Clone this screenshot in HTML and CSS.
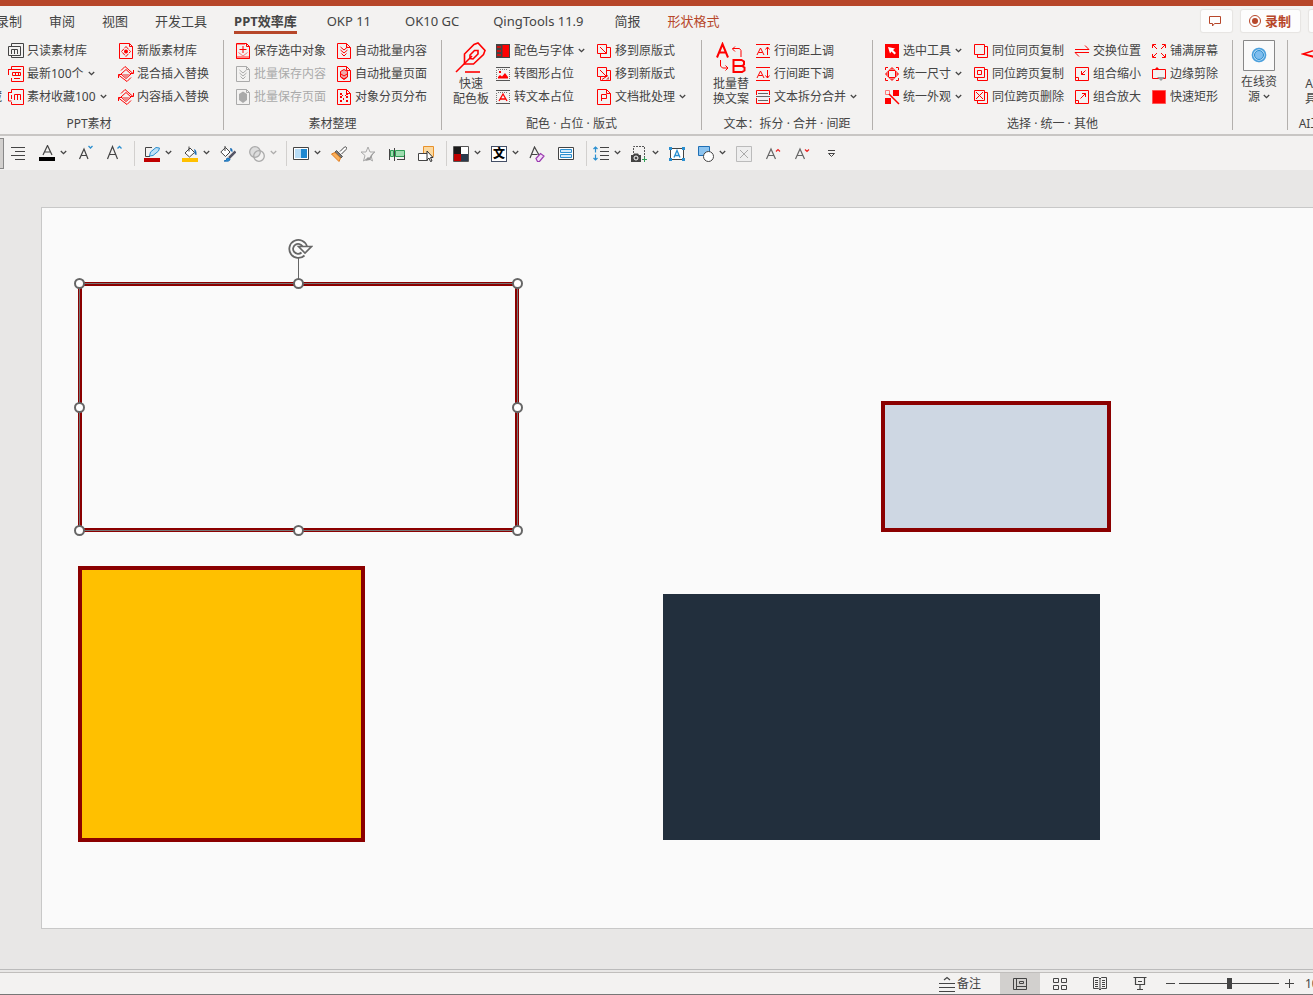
FILE: index.html
```html
<!doctype html>
<html lang="zh-CN">
<head>
<meta charset="utf-8">
<meta name="viewport" content="width=device-width, initial-scale=1.0">
<link rel="stylesheet" href="styles.css">
<title>PPT效率库</title>
</head>
<body>

<svg class="sprite" aria-hidden="true">
  <symbol id="chev" viewBox="0 0 7 5"><path d="M.8 1l2.7 2.7L6.2 1" fill="none" stroke="#444" stroke-width="1.3"/></symbol>
  <symbol id="doc" viewBox="0 0 16 16"><path d="M1.5.5h10l3 3v12h-13zM11.5.5v3h3" fill="none" stroke="currentColor"/></symbol>
  <symbol id="doc-r" viewBox="0 0 16 16"><path d="M1.5.5h9l4 4v11h-13zM10.5.5v4h4" fill="none" stroke="currentColor"/></symbol>

  <!-- PPT素材 -->
  <symbol id="readonly" viewBox="0 0 16 16"><g fill="none" stroke="currentColor"><path d="M3.5 3V.5h12v14h-12V13"/><path d="M.5 3.5h12v9H.5z"/><path d="M3.5 11V6.5h6V11M6.5 6.5V11"/></g></symbol>
  <symbol id="latest" viewBox="0 0 16 16"><g fill="none" stroke="currentColor"><path d="M3.5 3V.5h12v15h-12V12M0 3.5h13"/><path d="M.5 3v6M4.5 6.5h8v3h-8zM7.5 6v4M10.5 6v4M6 12.5h6"/></g></symbol>
  <symbol id="favorite" viewBox="0 0 16 16"><g fill="none" stroke="currentColor"><path d="M3.5 3V.5h12v15h-12V13M0 3.5h4M.5 3v9h3"/><path d="M6.5 11V5.5h6V11M9.5 5.5V11M3.5 6v4"/></g></symbol>
  <symbol id="newlib" viewBox="0 0 16 16"><path d="M8 3.5L12.5 8.5 8 13.5 3.500 8.500z" fill="none" stroke="currentColor" stroke-dasharray="4 1"/><circle cx="8" cy="8.5" r="2" fill="currentColor"/></symbol>
  <symbol id="swap-in" viewBox="0 0 16 16"><path d="M8 3.500l5 4.500-5 4.500L3 8z" fill="none" stroke="currentColor"/><path d="M4 8h8l-4 4z" fill="#e88"/><path d="M3 4.500L7 .5l8 7M15.500 4v3.500H12M13 11.500l-4 4L.5 9M.5 12V8.500H4" fill="none" stroke="currentColor"/></symbol>

  <!-- 素材整理 -->
  <symbol id="saveobj" viewBox="0 0 16 16"><path d="M1 13h14v3H1z" fill="#f88"/><path d="M1 1h9v1H1z" fill="#f88"/><path d="M8 3v7M4.500 6.500h7" stroke="currentColor"/><path d="M3.500 9.500L8 13l4.500-3.500" fill="none" stroke="#f77"/></symbol>
  <symbol id="arrows" viewBox="0 0 16 16"><path d="M4.500 4L8 7l3.500-3M4.500 7L8 10l3.500-3M5.500 10.500L8 13l2.500-2.500" fill="none" stroke="currentColor"/></symbol>
  <symbol id="blob" viewBox="0 0 16 16"><path d="M8 2.500l4 2.500v6l-4 3-4-3V5z" fill="currentColor"/></symbol>
  <symbol id="blob-r" viewBox="0 0 16 16"><path d="M8 3.500l3.500 2v5.500L8 13.500 4.500 11V5.500z" fill="#eaa" stroke="currentColor"/><path d="M5 8l3 2 3-2M5 11l3 2 3-2" fill="none" stroke="currentColor"/></symbol>
  <symbol id="spread" viewBox="0 0 16 16"><path d="M4 4h2v2H4zM6 6h1v1H6zM4 7h2v2H4zM4 11h2v2H4zM10 4h2v2h-2zM9 6h1v1H9zM10 7h2v2h-2zM10 11h2v2h-2zM7 9h1v2H7z" fill="currentColor"/></symbol>

  <!-- 配色 -->
  <symbol id="pen" viewBox="0 0 32 32"><g fill="none" stroke="currentColor" stroke-width="1.600"><path d="M1 30L17 14"/><path d="M9.500 22V12L19 2.500l4-1.500 7 7.500-1.500 4L18.500 22H9.500z"/><path d="M15 16.500V13l4.500-4.500h3.500v3.500L18 17z"/><path d="M10 30h15"/></g></symbol>
  <symbol id="palette" viewBox="0 0 16 16"><path d="M1 1h14v14H1z" fill="#444"/><path d="M7.500 2H14v12H7.500z" fill="currentColor"/><path d="M2 3h4v2H2zM2 7h4v2H2zM2 11h4v2H2z" fill="#c11"/></symbol>
  <symbol id="ph-img" viewBox="0 0 16 16"><path d="M1 1.500h14M1 14.500h14" stroke="#555"/><path d="M1.500 4v9M14.500 4v9M3 3.500h10" stroke="#777" stroke-dasharray="1 1"/><path d="M3 12.500V11l2-2 2 1.500L10 7l3 4v1.500z" fill="currentColor"/><path d="M4 5h2v2H4z" fill="currentColor"/></symbol>
  <symbol id="ph-text" viewBox="0 0 16 16"><path d="M1 1.500h14M1 14.500h14" stroke="#555"/><path d="M1.500 4v9M14.500 4v9M3 3.500h10" stroke="#777" stroke-dasharray="1 1"/><path d="M4 12l4-7 4 7M5.500 10h5" fill="none" stroke="currentColor" stroke-width="1.300"/></symbol>
  <symbol id="move" viewBox="0 0 16 16"><path d="M1.500 1.500h9v9h-9z M11 4.500h3.500v10h-10V11M4 4l6.500 6.500" fill="none" stroke="currentColor"/></symbol>
  <symbol id="move-new" viewBox="0 0 16 16"><path d="M11 12.500l2-2v3h-3z" fill="#c66"/><path d="M1.500 1.500h9v9h-9zM11 4.500h3.500v10h-10V11M4 4l6.500 6.500M12 9.500l-6 4" fill="none" stroke="currentColor"/></symbol>
  <symbol id="batch" viewBox="0 0 16 16"><path d="M5.500 12V5.500h5v4h-5" fill="none" stroke="currentColor"/></symbol>

  <!-- 文本 -->
  <symbol id="ab" viewBox="0 0 32 32"><g fill="none" stroke="currentColor"><path d="M2 15.500L7.500 2 13 15.500M4 10.500h7" stroke-width="2"/><path d="M18.500 18h8l2.500 1.500v3L27 24l2.500 1.500v3L27 30h-8.500zM18.500 24H27" stroke-width="2"/><path d="M20 4.500L17.500 7l2.500 2.500M17.500 6.500h7l1.500 2V15M5.500 18v6l2 2h5M10.500 23.500l2.500 2.500-2.500 2.500"/></g></symbol>
  <symbol id="sp-up" viewBox="0 0 16 16"><path d="M1 1.500h14M1 14.500h14M2 12l3.500-7L9 12M3.500 9.500h4M12.500 12V4M10.500 6.500l2-2.500 2 2.500" fill="none" stroke="currentColor"/></symbol>
  <symbol id="sp-down" viewBox="0 0 16 16"><path d="M1 1.500h14M1 14.500h14M2 12l3.500-7L9 12M3.500 9.500h4M12.500 4v8M10.500 9.500l2 2.500 2-2.500" fill="none" stroke="currentColor"/></symbol>
  <symbol id="split" viewBox="0 0 16 16"><path d="M1.500 6V1.500h13V6M1.500 9v5.500h13V9" fill="none" stroke="currentColor"/><path d="M3 4.500h10M3 11.500h10M1 7.500h14" stroke="#666"/></symbol>

  <!-- 选择 -->
  <symbol id="select" viewBox="0 0 16 16"><path d="M1 1h14v14H1z" fill="currentColor"/><path d="M4 4l7 1.500-2 1.500 3 3-1.500 1.500-3-3L6 10.500z" fill="#fff"/></symbol>
  <symbol id="size" viewBox="0 0 16 16"><g fill="none" stroke="currentColor"><path d="M1.500 4V1.500H4M12 1.500h2.500V4M14.500 12v2.500H12M4 14.500H1.500V12"/><path d="M8 2v3M8 11v3M2 8h3M11 8h3M5 4.500L8 1.500l3 3M5 11.500l3 3 3-3M4.500 5l-3 3 3 3M11.500 5l3 3-3 3"/><path d="M5 4.500h6l.5.5v6l-.5.5H5l-.5-.5V5z"/></g></symbol>
  <symbol id="look" viewBox="0 0 16 16"><path d="M9 1h6v6H9zM1 9h6v6H1z" fill="currentColor"/><path d="M1.500 1.500h4v4h-4z" fill="none" stroke="#f77"/><path d="M5 5l10 10" stroke="currentColor" stroke-width="1.500"/></symbol>
  <symbol id="pages" viewBox="0 0 16 16"><path d="M1.500 1.500h10v10h-10zM12 3.500h2.500v11H4.500V12" fill="none" stroke="currentColor"/></symbol>
  <symbol id="pg-in" viewBox="0 0 16 16"><path d="M4.500 4.500h4v4h-4z" fill="none" stroke="currentColor"/></symbol>
  <symbol id="pg-x" viewBox="0 0 16 16"><path d="M3 3l7 7M10 3l-7 7" stroke="currentColor"/></symbol>
  <symbol id="swap" viewBox="0 0 16 16"><path d="M1 6.500h14L11 2.500M15 9.500H1l4 4" fill="none" stroke="currentColor"/></symbol>
  <symbol id="shrink" viewBox="0 0 16 16"><path d="M1.500 1.500h13v13h-13zM1.500 11.500h3v3M11.500 4.500l-4 4M7.500 5v3.500H11" fill="none" stroke="currentColor"/></symbol>
  <symbol id="grow" viewBox="0 0 16 16"><path d="M1.500 1.500h13v13h-13zM1.500 11.500h3v3M6.500 9.500l5-5M8 4.500h3.500V8" fill="none" stroke="currentColor"/></symbol>
  <symbol id="fill" viewBox="0 0 16 16"><path d="M1.500 5V1.500H5M11 1.500h3.500V5M14.500 11v3.500H11M5 14.500H1.500V11M2 2l4 4M14 2l-4 4M2 14l4-4M14 14l-4-4" fill="none" stroke="currentColor"/></symbol>
  <symbol id="edge" viewBox="0 0 16 16"><path d="M1.500 3.500h13v9h-13z" fill="none" stroke="currentColor"/><path d="M3 4l3-3 3 3z" fill="currentColor"/><path d="M6 11h8l-4 4z" fill="#999"/></symbol>
  <symbol id="rect" viewBox="0 0 16 16"><path d="M1.500 1.500h13v13h-13z" fill="currentColor" stroke="#f55"/></symbol>

  <!-- quick access toolbar -->
  <symbol id="t-lines" viewBox="0 0 16 16"><path d="M1 2.500h14M5 6.500h10M1 10.500h14M5 14.500h10" stroke="#444"/></symbol>
  <symbol id="t-color" viewBox="0 0 16 16"><path d="M4 10L8.500.5 13 10M5.500 7h6" fill="none" stroke="#444" stroke-width="1.200"/><path d="M0 12h16v4H0z"/></symbol>
  <symbol id="t-adown" viewBox="0 0 16 16"><path d="M2.500 14L7 4l4 10M4 10.500h6" fill="none" stroke="#444" stroke-width="1.200"/><path d="M11.500 1l2 2 2-2" fill="none" stroke="#2a8fd0" stroke-width="1.300"/></symbol>
  <symbol id="t-aup" viewBox="0 0 16 16"><path d="M1.500 14L6.500 1.500 11.500 14M3 9.500h7" fill="none" stroke="#444" stroke-width="1.200"/><path d="M11.500 3.500l2-2 2 2" fill="none" stroke="#2a8fd0" stroke-width="1.300"/></symbol>
  <symbol id="t-pen" viewBox="0 0 16 16"><path d="M8 1.500H1.500v9H6" fill="none" stroke="#444"/><path d="M5.500 10l1-4L12 1.500 15.500 2 14.500 5 9 9.500z" fill="#bfe0f5" stroke="#2a8fd0"/><path d="M0 12h16v4H0z" fill="#c00000"/></symbol>
  <symbol id="t-bucket" viewBox="0 0 16 16"><path d="M3 7l5-5 4.500 4.500L7.500 11zM7 .5v5" fill="#fff" stroke="#444"/><path d="M12 3q3 1 2.500 6-2.500 0-2-4z" fill="#1f6fb5"/><path d="M0 12h16v4H0z" fill="#ffc000"/></symbol>
  <symbol id="t-style" viewBox="0 0 16 16"><path d="M.8 6L5.500 1.500 10 6l-4.500 4.500zM5 0v5" fill="#fff" stroke="#444"/><path d="M10 2q3 0 2.500 4l-2-1z" fill="#1f6fb5"/><path d="M15.500 5.500L9 12" stroke="#556" stroke-width="2.500"/><path d="M4 15q3 0 3-3l3 1q0 3-6 2z" fill="#2a8fd0" stroke="#1f6fb5"/></symbol>
  <symbol id="t-merge" viewBox="0 0 16 16"><g fill="none" stroke="#aaa" stroke-width="1.300"><circle cx="6" cy="6" r="5.300" fill="#ddd"/><circle cx="10" cy="10" r="5.300"/></g></symbol>
  <symbol id="t-half" viewBox="0 0 16 16"><path d="M.5 1.500h15v12H.5z" fill="#fff" stroke="#444"/><path d="M2 3h6v9H2z" fill="#b8dcf5"/><path d="M8 3h6v9H8z" fill="#1e88d0"/></symbol>
  <symbol id="t-brush" viewBox="0 0 16 16"><path d="M9 5.500L13.500 1q1.500-.5 2 .5T15 3.500L10.500 8" fill="#fff" stroke="#444"/><path d="M5.500 4.500l6 6-1.500 1.500-6-6z" fill="#777" stroke="#555"/><path d="M.5 8L4 6.500l5.500 5.500L8 15.500z" fill="#fbb15a" stroke="#e07b1c"/></symbol>
  <symbol id="t-star" viewBox="0 0 16 16"><path d="M8 1l2 5h5l-4 3.500 1.500 5.500L8 12l-4.500 3L5 9.500 1 6h5z" fill="none" stroke="#aaa"/><path d="M14.500 5L9 12l-1-1-3 4 5-1z" fill="#999"/></symbol>
  <symbol id="t-align" viewBox="0 0 16 16"><path d="M1.500 4.500h3v6h-3zM6.500 4.500h9v6h-9z" fill="#9fdcb0" stroke="#2f9e55"/><path d="M.5 3v11M5.500 2v13M15.500 9v5M8 13.500h7" stroke="#444"/></symbol>
  <symbol id="t-pick" viewBox="0 0 16 16"><path d="M5.500.5h10v10h-10z" fill="#fbd9a0" stroke="#e8912a"/><path d="M.5 7.500h9v7h-9z" fill="#fff" stroke="#444"/><path d="M9 5v9l2-2 1.500 3.500 1.500-.5-1.500-3.500H15z" fill="#fff" stroke="#333"/></symbol>
  <symbol id="t-swatch" viewBox="0 0 16 16"><path d="M.5.5h15v15H.5z" fill="#fff" stroke="#555"/><path d="M1 1h7v7H1z" fill="#1a1a1a"/><path d="M1 8h7v7H1z" fill="#c00000"/><path d="M8 8h7v7H8z" fill="#2b3a4c"/></symbol>
  <symbol id="t-erase" viewBox="0 0 16 16"><path d="M1 12L5.500 1 10 9M2.500 8.500h6" fill="none" stroke="#444" stroke-width="1.200"/><path d="M7 12.500l4.500-5 3.500 2.500-4.500 5.500H8.500z" fill="#f3dcf7" stroke="#9b3bb0" stroke-width="1.200"/></symbol>
  <symbol id="t-form" viewBox="0 0 16 16"><path d="M.5 1.500h15v12H.5z" fill="#fff" stroke="#444"/><path d="M2.500 3.500h11v3h-11zM2.500 8.500h11v3h-11z" fill="#d5eafa" stroke="#2a8fd0"/></symbol>
  <symbol id="t-spacing" viewBox="0 0 16 16"><path d="M7 1.500h9M7 5.500h9M7 9.500h9M7 13.500h9" stroke="#444"/><path d="M2.500 1v5.500M.5 3l2-2 2 2M2.500 8.500V14M.5 12l2 2 2-2" fill="none" stroke="#2a8fd0" stroke-width="1.200"/></symbol>
  <symbol id="t-shot" viewBox="0 0 16 16"><path d="M2.500 7V.5h11V11" fill="none" stroke="#555" stroke-dasharray="2 1"/><path d="M0 9h2l1-1.500h4L8 9h2v7H0z" fill="#444"/><circle cx="5" cy="12" r="2" fill="#444" stroke="#fff"/><path d="M13.500 11v5M11 13.500h5" stroke="#2f9e55"/></symbol>
  <symbol id="t-box" viewBox="0 0 16 16"><path d="M1.500 2.500h13v11h-13z" fill="#fff" stroke="#444"/><path d="M0 1h3v3H0zM13 1h3v3h-3zM0 12h3v3H0zM13 12h3v3h-3z" fill="#2a8fd0"/><path d="M5 11.500l3-7 3 7M6 9.500h4" fill="none" stroke="#2a8fd0" stroke-width="1.300"/></symbol>
  <symbol id="t-shapes" viewBox="0 0 16 16"><path d="M.5.5h11v9H.5z" fill="#8cc4f0" stroke="#1e6fb5"/><circle cx="10.500" cy="10.500" r="5" fill="#fff" stroke="#444"/></symbol>
  <symbol id="t-no" viewBox="0 0 16 16"><path d="M.5.5h15v15H.5z" fill="#eee" stroke="#bbb"/><path d="M4 4l8 8M12 4l-8 8" stroke="#aaa"/></symbol>
  <symbol id="t-a1" viewBox="0 0 16 16"><path d="M1.500 13L6 3l4.500 10M3 9.500h6" fill="none" stroke="#666" stroke-width="1.200"/><path d="M11 5.500l2-2 2 2" fill="none" stroke="#e22" stroke-width="1.200"/></symbol>
  <symbol id="t-a2" viewBox="0 0 16 16"><path d="M1.500 13L6 3l4.500 10M3 9.500h6" fill="none" stroke="#666" stroke-width="1.200"/><path d="M11 3.500l2 2 2-2" fill="none" stroke="#e22" stroke-width="1.200"/></symbol>
  <symbol id="t-more" viewBox="0 0 16 16"><path d="M5 4.500h7M5.500 7.500l3 3 3-3z" fill="none" stroke="#444"/></symbol>

  <!-- status bar -->
  <symbol id="s-notes" viewBox="0 0 16 16"><path d="M0 7.500h16M0 11.500h16M0 15.500h16M5 4l3-2.500L11 4" fill="none" stroke="#444" stroke-width="1.200"/></symbol>
  <symbol id="s-normal" viewBox="0 0 16 16"><path d="M1.500 2.500h13v11h-13zM4.500 2.500v11M5 10.500h9.500M7.500 5.500h4v2h-4z" fill="none" stroke="#444"/></symbol>
  <symbol id="s-grid" viewBox="0 0 16 16"><path d="M1.500 2.500h5v4h-5zM9.500 2.500h5v4h-5zM1.500 9.500h5v4h-5zM9.500 9.500h5v4h-5z" fill="none" stroke="#444"/></symbol>
  <symbol id="s-read" viewBox="0 0 16 16"><path d="M1.500 1.500h5L8 3l1.500-1.500h5v11H9.500L8 14l-1.500-1.500h-5zM8 3v11M3 4.500h3M3 6.500h3M3 8.500h3M3 10.500h3M10 4.500h3M10 6.500h3M10 8.500h3M10 10.500h3" fill="none" stroke="#444"/></symbol>
  <symbol id="s-show" viewBox="0 0 16 16"><path d="M1.500 1.500h13M3.500 2v6.500h9V2M6 5.500h4M8 8.500v5M5 13.500h6" fill="none" stroke="#444" stroke-width="1.200"/></symbol>
</svg>

<div class="app">
  <div class="titlebar"></div>

  <nav class="tabs">
    <a href="#">录制</a>
    <a href="#">审阅</a>
    <a href="#">视图</a>
    <a href="#">开发工具</a>
    <a href="#" class="active">PPT效率库</a>
    <a href="#" class="addin">OKP 11</a>
    <a href="#" class="addin">OK10 GC</a>
    <a href="#" class="addin">QingTools 11.9</a>
    <a href="#">简报</a>
    <a href="#" class="context">形状格式</a>
    <div class="tab-actions">
      <button aria-label="批注"><svg width="12" height="12" viewBox="0 0 12 12"><path d="M.5 1.500h11v7H5.500L3.500 11V8.500h-3z" fill="none" stroke="currentColor"/></svg></button>
      <button><svg width="14" height="14" viewBox="0 0 14 14"><circle cx="7" cy="7" r="5.500" fill="none" stroke="currentColor"/><circle cx="7" cy="7" r="3" fill="currentColor"/></svg>录制</button>
      <button aria-label="共享"></button>
    </div>
  </nav>

  <div class="ribbon">
    <section class="group g-lib">
      <div class="body">
        <div class="col">
          <button class="cmd last">收藏</button>
        </div>
        <div class="col">
          <button class="cmd"><svg class="ico dark"><use href="#readonly"/></svg>只读素材库</button>
          <button class="cmd"><svg class="ico"><use href="#latest"/></svg>最新100个<svg class="chev"><use href="#chev"/></svg></button>
          <button class="cmd"><svg class="ico"><use href="#favorite"/></svg>素材收藏100<svg class="chev"><use href="#chev"/></svg></button>
        </div>
        <div class="col">
          <button class="cmd"><svg class="ico"><use href="#doc"/><use href="#newlib"/></svg>新版素材库</button>
          <button class="cmd"><svg class="ico"><use href="#swap-in"/></svg>混合插入替换</button>
          <button class="cmd"><svg class="ico"><use href="#swap-in"/></svg>内容插入替换</button>
        </div>
      </div>
      <h2>PPT素材</h2>
    </section>

    <section class="group g-sort">
      <div class="body">
        <div class="col">
          <button class="cmd"><svg class="ico"><use href="#saveobj"/><use href="#doc"/></svg>保存选中对象</button>
          <button class="cmd" disabled><svg class="ico"><use href="#doc"/><use href="#arrows"/></svg>批量保存内容</button>
          <button class="cmd" disabled><svg class="ico"><use href="#doc"/><use href="#blob"/></svg>批量保存页面</button>
        </div>
        <div class="col">
          <button class="cmd"><svg class="ico"><use href="#doc-r"/><use href="#arrows"/></svg>自动批量内容</button>
          <button class="cmd"><svg class="ico"><use href="#doc-r"/><use href="#blob-r"/></svg>自动批量页面</button>
          <button class="cmd"><svg class="ico"><use href="#doc-r"/><use href="#spread"/></svg>对象分页分布</button>
        </div>
      </div>
      <h2>素材整理</h2>
    </section>

    <section class="group g-color">
      <div class="body">
        <button class="big"><svg><use href="#pen"/></svg>快速<br>配色板</button>
        <div class="col">
          <button class="cmd"><svg class="ico"><use href="#palette"/></svg>配色与字体<svg class="chev"><use href="#chev"/></svg></button>
          <button class="cmd"><svg class="ico"><use href="#ph-img"/></svg>转图形占位</button>
          <button class="cmd"><svg class="ico"><use href="#ph-text"/></svg>转文本占位</button>
        </div>
        <div class="col">
          <button class="cmd"><svg class="ico"><use href="#move"/></svg>移到原版式</button>
          <button class="cmd"><svg class="ico"><use href="#move-new"/></svg>移到新版式</button>
          <button class="cmd"><svg class="ico"><use href="#doc-r"/><use href="#batch"/></svg>文档批处理<svg class="chev"><use href="#chev"/></svg></button>
        </div>
      </div>
      <h2>配色 · 占位 · 版式</h2>
    </section>

    <section class="group g-text">
      <div class="body">
        <button class="big"><svg><use href="#ab"/></svg>批量替<br>换文案</button>
        <div class="col">
          <button class="cmd"><svg class="ico"><use href="#sp-up"/></svg>行间距上调</button>
          <button class="cmd"><svg class="ico"><use href="#sp-down"/></svg>行间距下调</button>
          <button class="cmd"><svg class="ico"><use href="#split"/></svg>文本拆分合并<svg class="chev"><use href="#chev"/></svg></button>
        </div>
      </div>
      <h2>文本：拆分 · 合并 · 间距</h2>
    </section>

    <section class="group g-select">
      <div class="body">
        <div class="col">
          <button class="cmd"><svg class="ico"><use href="#select"/></svg>选中工具<svg class="chev"><use href="#chev"/></svg></button>
          <button class="cmd"><svg class="ico"><use href="#size"/></svg>统一尺寸<svg class="chev"><use href="#chev"/></svg></button>
          <button class="cmd"><svg class="ico"><use href="#look"/></svg>统一外观<svg class="chev"><use href="#chev"/></svg></button>
        </div>
        <div class="col">
          <button class="cmd"><svg class="ico"><use href="#pages"/></svg>同位同页复制</button>
          <button class="cmd"><svg class="ico"><use href="#pages"/><use href="#pg-in"/></svg>同位跨页复制</button>
          <button class="cmd"><svg class="ico"><use href="#pages"/><use href="#pg-x"/></svg>同位跨页删除</button>
        </div>
        <div class="col">
          <button class="cmd"><svg class="ico"><use href="#swap"/></svg>交换位置</button>
          <button class="cmd"><svg class="ico"><use href="#shrink"/></svg>组合缩小</button>
          <button class="cmd"><svg class="ico"><use href="#grow"/></svg>组合放大</button>
        </div>
        <div class="col">
          <button class="cmd"><svg class="ico"><use href="#fill"/></svg>铺满屏幕</button>
          <button class="cmd"><svg class="ico"><use href="#edge"/></svg>边缘剪除</button>
          <button class="cmd"><svg class="ico"><use href="#rect"/></svg>快速矩形</button>
        </div>
      </div>
      <h2>选择 · 统一 · 其他</h2>
    </section>

    <section class="group g-online">
      <button class="big gallery"><svg viewBox="0 0 32 32"><path d="M.5.5h31v30H.5z" fill="#fafafa" stroke="#888"/><circle cx="16" cy="15" r="7.500" fill="#c8e2f6"/><circle cx="16" cy="15" r="6.500" fill="none" stroke="#4a9fdc" stroke-width="1.500"/><circle cx="16" cy="15" r="4.500" fill="#7fbdee" stroke="#2a8fd0"/></svg>在线资<br>源 <svg class="chev"><use href="#chev"/></svg></button>
    </section>

    <section class="group g-ai">
      <div class="body">
        <button class="big"><svg viewBox="0 0 32 32"><path d="M2 12l28-9-10 26-5-13zM2 12l13 3" fill="none" stroke="currentColor" stroke-width="1.500"/></svg>AI工<br>具箱</button>
      </div>
      <h2>AI工具箱</h2>
    </section>
  </div>

  <div class="quick">
    <div class="tools">
      <button class="pressed" aria-label="居中"></button>
      <button class="tool"><svg><use href="#t-lines"/></svg></button>
      <button class="tool"><svg><use href="#t-color"/></svg><svg class="chev"><use href="#chev"/></svg></button>
      <button class="tool"><svg><use href="#t-adown"/></svg></button>
      <button class="tool"><svg><use href="#t-aup"/></svg></button>
    </div>
    <div class="tools draw">
      <button class="tool"><svg><use href="#t-pen"/></svg><svg class="chev"><use href="#chev"/></svg></button>
      <button class="tool"><svg><use href="#t-bucket"/></svg><svg class="chev"><use href="#chev"/></svg></button>
      <button class="tool"><svg><use href="#t-style"/></svg></button>
      <button class="tool" disabled><svg><use href="#t-merge"/></svg><svg class="chev"><use href="#chev"/></svg></button>
    </div>
    <div class="tools">
      <button class="tool"><svg><use href="#t-half"/></svg><svg class="chev"><use href="#chev"/></svg></button>
      <button class="tool"><svg><use href="#t-brush"/></svg></button>
      <button class="tool"><svg><use href="#t-star"/></svg></button>
      <button class="tool"><svg><use href="#t-align"/></svg></button>
      <button class="tool"><svg><use href="#t-pick"/></svg></button>
    </div>
    <div class="tools">
      <button class="tool"><svg><use href="#t-swatch"/></svg><svg class="chev"><use href="#chev"/></svg></button>
      <button class="tool"><span class="wen">文</span><svg class="chev"><use href="#chev"/></svg></button>
      <button class="tool"><svg><use href="#t-erase"/></svg></button>
      <button class="tool"><svg><use href="#t-form"/></svg></button>
    </div>
    <div class="tools">
      <button class="tool"><svg><use href="#t-spacing"/></svg><svg class="chev"><use href="#chev"/></svg></button>
      <button class="tool"><svg><use href="#t-shot"/></svg><svg class="chev"><use href="#chev"/></svg></button>
      <button class="tool"><svg><use href="#t-box"/></svg></button>
      <button class="tool"><svg><use href="#t-shapes"/></svg><svg class="chev"><use href="#chev"/></svg></button>
      <button class="tool"><svg><use href="#t-no"/></svg></button>
      <button class="tool"><svg><use href="#t-a1"/></svg></button>
      <button class="tool"><svg><use href="#t-a2"/></svg></button>
      <button class="tool"><svg><use href="#t-more"/></svg></button>
    </div>
  </div>

  <main class="workspace">
    <div class="slide">
      <div class="shape outline">
        <svg class="rotate" viewBox="0 0 26 22"><g fill="none" stroke="#666"><path d="M17.500 17.500A9 9 0 1 1 20 8.500M14.500 14.500A5 5 0 1 1 15.500 8.500" stroke-width="1.800"/><path d="M11.500 8.500h13L18 15z" fill="#fafafa" stroke-width="1.600"/></g></svg>
        <i class="stem"></i>
        <i class="handle n w"></i><i class="handle n c"></i><i class="handle n e"></i>
        <i class="handle m w"></i><i class="handle m e"></i>
        <i class="handle s w"></i><i class="handle s c"></i><i class="handle s e"></i>
      </div>
      <div class="shape pale"></div>
      <div class="shape amber"></div>
      <div class="shape navy"></div>
    </div>
  </main>

  <footer class="status">
    <button class="notes"><svg><use href="#s-notes"/></svg>备注</button>
    <button class="view on" aria-label="普通视图"><svg><use href="#s-normal"/></svg></button>
    <button class="view" aria-label="幻灯片浏览"><svg><use href="#s-grid"/></svg></button>
    <button class="view" aria-label="阅读视图"><svg><use href="#s-read"/></svg></button>
    <button class="view" aria-label="放映"><svg><use href="#s-show"/></svg></button>
    <button class="zoom-btn" aria-label="缩小"><svg viewBox="0 0 9 9"><path d="M0 4.500h9" stroke="#444"/></svg></button>
    <input type="range" min="0" max="100" value="50" aria-label="显示比例">
    <button class="zoom-btn" aria-label="放大"><svg viewBox="0 0 9 9"><path d="M0 4.500h9M4.500 0v9" stroke="#444"/></svg></button>
    <span class="percent">101%</span>
  </footer>
</div>

</body>
</html>
```
FILE: styles.css
```css
* {
    box-sizing: border-box;
}
body {
    margin: 0;
    font-family: "Noto Sans", "Noto Sans CJK SC", sans-serif;
    font-size: 12px;
    line-height: 15px;
    color: #444;
    background: #f3f2f1;
}
button {
    margin: 0;
    padding: 0;
    border: 0;
    background: none;
    font: inherit;
    color: inherit;
    white-space: nowrap;
}
a {
    color: inherit;
    text-decoration: none;
}
svg {
    flex: none;
    display: block;
}
.sprite {
    position: absolute;
    width: 0;
    height: 0;
}
.app {
    display: flex;
    flex-direction: column;
    height: 100vh;
    overflow: hidden;
}
.titlebar {
    flex: none;
    height: 6px;
    background: #b7472a;
}

/* tabs */
.tabs {
    flex: none;
    display: flex;
    align-items: flex-start;
    gap: 27px;
    height: 34px;
    margin-left: -4px;
    font-size: 13px;
    white-space: nowrap;
}
.tabs a {
    padding: 5px 0 3px;
    line-height: 20px;
    border-bottom: 3px solid transparent;
    height: 28px;
}
.tabs .addin {
    padding-left: 3px;
    padding-right: 4px;
}
.tabs .active {
    font-weight: bold;
    border-color: #b7472a;
}
.tabs .context {
    color: #b7472a;
}
.tab-actions {
    display: flex;
    gap: 9px;
    margin: 4px -27px 0 auto;
    color: #b7472a;
    font-weight: bold;
}
.tab-actions button {
    display: flex;
    align-items: center;
    justify-content: center;
    gap: 3px;
    min-width: 31px;
    height: 22px;
    padding: 0 9px 0 7px;
    background: #fdfdfd;
    border-radius: 2px;
    box-shadow: 0 0 1px 1px #e6e4e2;
}

/* ribbon */
.ribbon {
    flex: none;
    display: flex;
    height: 96px;
    border-bottom: 2px solid #c8c6c4;
}
.group {
    flex: none;
    height: 90px;
    padding-left: 11px;
    border-right: 1px solid #b3b0ad;
}
.group h2 {
    margin: 7px 0 0;
    margin-left: -11px;
    font-size: 12px;
    font-weight: normal;
    line-height: 15px;
    text-align: center;
    white-space: nowrap;
}
.body {
    display: grid;
    height: 69px;
}
.g-lib {
    width: 269px;
    margin-left: -45px;
}
.g-lib .body {
    grid-template-columns: 42px 110px 1fr;
}
.g-sort {
    width: 218px;
}
.g-sort .body {
    grid-template-columns: 101px 1fr;
}
.g-color,
.g-text,
.g-ai {
    padding-left: 6px;
}
.g-color h2,
.g-text h2,
.g-ai h2 {
    margin-left: -6px;
}
.g-color {
    width: 260px;
}
.g-color .body {
    grid-template-columns: 47px 101px 1fr;
}
.g-text {
    width: 171px;
}
.g-text .body {
    grid-template-columns: 47px 1fr;
}
.g-select {
    width: 360px;
}
.g-select .body {
    grid-template-columns: 89px 101px 77px 1fr;
}
.g-online {
    width: 55px;
    padding: 0 3px;
}
.g-ai {
    width: 70px;
}
.g-ai .body {
    grid-template-columns: 47px;
}
.col {
    display: flex;
    flex-direction: column;
}
.cmd {
    display: flex;
    align-items: center;
    height: 23px;
    padding-bottom: 2px;
}
.last {
    margin-top: auto;
    padding-left: 12px;
}
.ico {
    width: 16px;
    height: 16px;
    margin-right: 3px;
    color: #f00;
}
.dark {
    color: #444;
}
.chev {
    width: 7px;
    height: 5px;
    margin-left: 4px;
}
.cmd:disabled,
.cmd:disabled .ico {
    color: #aaa;
}
.big {
    width: 46px;
    line-height: 15px;
    text-align: center;
    align-self: start;
}
.big > svg:first-child {
    width: 32px;
    height: 32px;
    margin: 2px auto;
    color: #f00;
}
.gallery .chev {
    display: inline-block;
    margin: 0 0 2px;
}
.big.gallery > svg:first-child {
    margin-top: 0;
}

/* quick access toolbar */
.quick {
    flex: none;
    display: flex;
    height: 34px;
}
.tools {
    display: flex;
    align-items: center;
}
.tools + .tools {
    height: 25px;
    margin: 5px 0 0 5px;
    border-left: 1px solid #d2d0ce;
}
.draw {
    padding-left: 3px;
}
.pressed {
    width: 4px;
    height: 31px;
    background: #d2d0ce;
    border: 1px solid #888;
    border-left: 0;
}
.tool {
    display: flex;
    align-items: center;
    height: 24px;
    padding: 0 7px 0 6px;
}
.tool svg:first-child {
    width: 16px;
    height: 16px;
}
.tool .chev {
    margin: 0 -3px 2px 5px;
}
.tool:disabled .chev {
    opacity: .4;
}
.wen {
    width: 16px;
    height: 16px;
    border: 1px solid #444f66;
    background: #fff;
    color: #000;
    font-weight: 900;
    line-height: 13px;
}

/* slide */
.workspace {
    flex: 1;
    min-height: 0;
    padding: 37px 0 40px 41px;
    background: #e8e7e6;
    overflow: hidden;
}
.slide {
    position: relative;
    height: 100%;
    background: #fafafa;
    border: 1px solid #c8c8c8;
    border-right: 0;
}
.shape {
    position: absolute;
    border: 4px solid #8b0000;
}
.outline {
    left: 36px;
    top: 74px;
    width: 441px;
    height: 250px;
}
.outline:before {
    content: "";
    position: absolute;
    inset: -3px;
    border: 1px solid #777;
}
.pale {
    left: 839px;
    top: 193px;
    width: 230px;
    height: 131px;
    background: #ced7e3;
}
.amber {
    left: 36px;
    top: 358px;
    width: 287px;
    height: 276px;
    background: #ffc000;
}
.navy {
    left: 621px;
    top: 386px;
    width: 437px;
    height: 246px;
    background: #222f3d;
    border: 0;
}
.handle {
    position: absolute;
    width: 11px;
    height: 11px;
    border: 2px solid #666;
    border-radius: 50%;
    background: #fff;
}
.n { top: -8px; }
.m { top: calc(50% - 5px); }
.s { bottom: -8px; }
.w { left: -8px; }
.c { left: calc(50% - 6px); }
.e { right: -8px; }
.stem {
    position: absolute;
    left: calc(50% - 1px);
    top: -28px;
    width: 1px;
    height: 22px;
    background: #666;
}
.rotate {
    position: absolute;
    left: calc(50% - 12px);
    top: -48px;
    width: 26px;
    height: 22px;
}

/* status bar */
.status {
    flex: none;
    display: flex;
    justify-content: flex-end;
    align-items: center;
    height: 26px;
    border-top: 1px solid #bbb;
    border-bottom: 1px solid #777;
    box-shadow: inset 0 2px #e8e7e6, inset 0 3px #c0bebc;
    padding-top: 3px;
}
.notes {
    display: flex;
    align-items: center;
    gap: 2px;
    margin-right: 19px;
}
.status svg {
    width: 16px;
    height: 16px;
}
.view {
    display: flex;
    align-items: center;
    justify-content: center;
    width: 40px;
    height: 100%;
}
.on {
    background: #d2d0ce;
}
.zoom-btn {
    margin: 0 4px 0 6px;
}
.status .zoom-btn svg {
    width: 9px;
    height: 9px;
}
.status input {
    appearance: none;
    width: 100px;
    height: 12px;
    margin: 0;
    background: linear-gradient(#444, #444) center / 100% 1px no-repeat;
}
.status input::-webkit-slider-thumb {
    appearance: none;
    width: 5px;
    height: 11px;
    background: #444;
}
.percent {
    width: 30px;
    margin: 0 -22px 0 7px;
}
```
